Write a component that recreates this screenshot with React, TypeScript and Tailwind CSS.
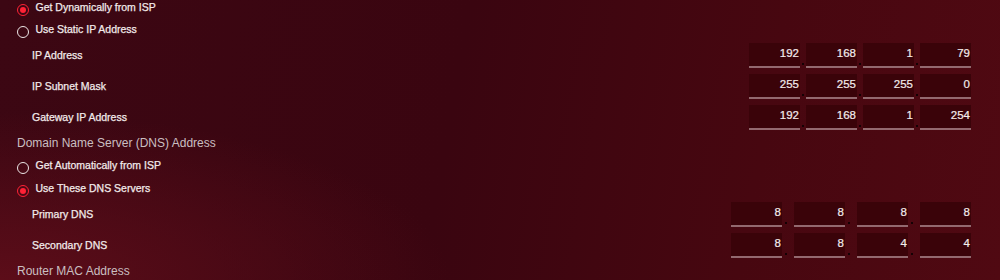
import React from "react";

// WAN settings fragment: IP + DNS addressing, dark red router theme

type Octets = [string, string, string, string];

const ipRows: { label: string; value: Octets }[] = [
  { label: "IP Address", value: ["192", "168", "1", "79"] },
  { label: "IP Subnet Mask", value: ["255", "255", "255", "0"] },
  { label: "Gateway IP Address", value: ["192", "168", "1", "254"] },
];

const dnsRows: { label: string; value: Octets }[] = [
  { label: "Primary DNS", value: ["8", "8", "8", "8"] },
  { label: "Secondary DNS", value: ["8", "8", "4", "4"] },
];

function Radio({ checked, label, className = "" }: { checked?: boolean; label: string; className?: string }) {
  return (
    <div className={`flex h-[16px] items-center ${className}`}>
      {checked ? (
        <span className="mt-[3px] flex h-[12px] w-[12px] items-center justify-center rounded-full border-[1.5px] border-[#ff2236]">
          <span className="h-[6px] w-[6px] rounded-full bg-[#ff2236]" />
        </span>
      ) : (
        <span className="mt-[3px] h-[12px] w-[12px] rounded-full border-[1.5px] border-[#ece6e6]" />
      )}
      <span className="ml-[6.5px] text-[10.5px] text-[#f2eaea] [-webkit-text-stroke:0.25px_#f2eaea]">{label}</span>
    </div>
  );
}

function OctetBox({ value }: { value: string }) {
  return (
    <div className="flex h-[25px] w-[51px] items-center justify-end border-b-2 border-[#93696f] bg-[#3a0309] pr-[1px] pb-[1px] text-[11.5px] text-[#f4ecec] [-webkit-text-stroke:0.2px_#f4ecec]">
      {value}
    </div>
  );
}

function OctetRow({ label, value, wide }: { label: string; value: Octets; wide?: boolean }) {
  return (
    <div className="flex h-[25px] items-center justify-between">
      <span className="pl-[15px] text-[10.5px] text-[#f2eaea] [-webkit-text-stroke:0.25px_#f2eaea]">{label}</span>
      <div className="flex items-stretch">
        {value.map((v, i) => (
          <React.Fragment key={i}>
            <OctetBox value={v} />
            {i < 3 && (
              <div className={`flex items-end pb-[3px] ${wide ? "w-[12px] pl-[2.5px]" : "w-[6px] pl-[1.5px]"}`}>
                <span className="h-[2px] w-[2px] bg-[#150104]" />
              </div>
            )}
          </React.Fragment>
        ))}
      </div>
    </div>
  );
}

export default function App() {
  return (
    <div
      className="h-[280px] w-[1000px] overflow-hidden bg-[radial-gradient(ellipse_45%_60%_at_0%_100%,#5c0d19_0%,rgba(92,13,25,0)_100%),linear-gradient(100deg,#3c0713_0%,#3a0510_45%,#470710_75%,#500912_100%)] pl-[17px] pr-[29px]"
      style={{ fontFamily: '"Liberation Sans", Arial, sans-serif' }}
    >
      <Radio checked label="Get Dynamically from ISP" />
      <Radio label="Use Static IP Address" className="mt-[6px]" />

      <div className="mt-[5px] flex flex-col gap-[6px]">
        {ipRows.map((r) => (
          <OctetRow key={r.label} label={r.label} value={r.value} />
        ))}
      </div>

      <div className="mt-[4px] flex h-[17px] items-center text-[12px] text-[#cabfc1]">
        Domain Name Server (DNS) Address
      </div>

      <Radio label="Get Automatically from ISP" className="mt-[7px]" />
      <Radio checked label="Use These DNS Servers" className="mt-[7px]" />

      <div className="mt-[5px] flex flex-col gap-[6px]">
        {dnsRows.map((r) => (
          <OctetRow key={r.label} label={r.label} value={r.value} wide />
        ))}
      </div>

      <div className="mt-[4px] flex h-[17px] items-center text-[12px] text-[#cabfc1]">Router MAC Address</div>
    </div>
  );
}
